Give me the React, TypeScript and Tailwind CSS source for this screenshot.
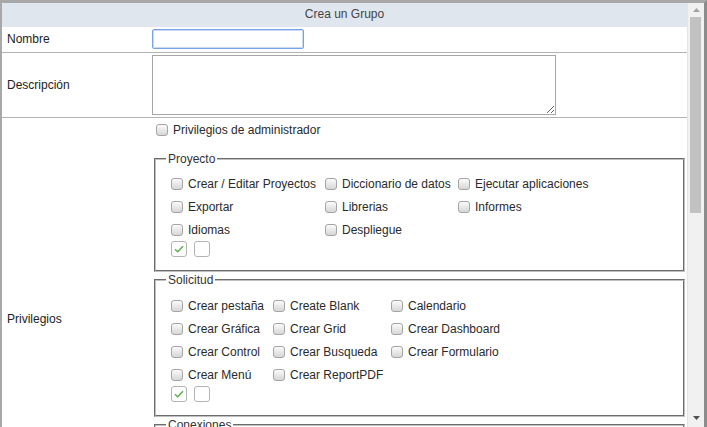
import React from 'react'

const proyecto = [
  'Crear / Editar Proyectos',
  'Diccionario de datos',
  'Ejecutar aplicaciones',
  'Exportar',
  'Librerias',
  'Informes',
  'Idiomas',
  'Despliegue',
]

const solicitud = [
  'Crear pestaña',
  'Create Blank',
  'Calendario',
  'Crear Gráfica',
  'Crear Grid',
  'Crear Dashboard',
  'Crear Control',
  'Crear Busqueda',
  'Crear Formulario',
  'Crear Menú',
  'Crear ReportPDF',
]

const conexiones = ['Crear Conexión', 'Editar Conexión', 'Eliminar Conexión', 'Probar Conexión']

function Box() {
  return (
    <span className="inline-block w-[12px] h-[12px] shrink-0 rounded-[3px] border border-[#a5a5a5] bg-linear-to-b from-[#fbfbfb] to-[#d6d6d6]" />
  )
}

function Check({ label }: { label: string }) {
  return (
    <div className="flex items-center h-[23px] whitespace-nowrap">
      <Box />
      <span className="ml-[5px]">{label}</span>
    </div>
  )
}

function Toggles() {
  return (
    <div className="flex gap-[7px] h-[16px]">
      <span className="w-[16px] h-[16px] rounded-[3px] border border-[#b3b3b3] bg-white flex items-center justify-center">
        <svg width="10" height="8" viewBox="0 0 10 8">
          <path d="M1 4.3 L3.7 6.8 L9 1.2" stroke="#5cae4a" strokeWidth="1.5" fill="none" />
        </svg>
      </span>
      <span className="w-[16px] h-[16px] rounded-[3px] border border-[#b3b3b3] bg-white" />
    </div>
  )
}

function Group({ title, items, cols, pt }: { title: string; items: string[]; cols: string; pt: string }) {
  return (
    <fieldset className={`mx-[2px] min-w-0 border-2 [border-style:groove] border-[#c0c0c0] pl-[10px] pr-[10px] pb-[13px] ${pt}`}>
      <legend className="px-[2px] leading-[14px] text-[#333]">{title}</legend>
      <div className="pl-[5px]">
        <div className={cols}>
          {items.map((it) => (
            <Check key={it} label={it} />
          ))}
        </div>
        <Toggles />
      </div>
    </fieldset>
  )
}

export default function App() {
  return (
    <div className="w-[707px] h-[427px] flex bg-white overflow-hidden font-['Liberation_Sans',Arial,sans-serif] text-[12px] text-[#222] border-t-[3px] border-l-2 border-[#a8a8a8] border-r-[3px] border-r-[#8c8c8c]">
      <div className="flex-1 min-w-0 overflow-hidden">
        <div className="h-[24px] pb-[2px] bg-[#dfe6ee] flex items-center justify-center text-[#444]">Crea un Grupo</div>

        <div className="flex border-b border-[#b4b4b4]">
          <div className="w-[148px] shrink-0 pl-[5px] pb-[1px] flex items-center">Nombre</div>
          <div className="pl-[2px] pt-[2px] pb-[3px]">
            <input
              type="text"
              className="block w-[152px] h-[20px] rounded-[2px] border border-[#7aa0e6] shadow-[inset_0_0_0_1px_#c9d9f6] outline-none px-1"
            />
          </div>
        </div>

        <div className="flex border-b border-[#b4b4b4]">
          <div className="w-[148px] shrink-0 pl-[5px] pb-[1px] flex items-center">Descripción</div>
          <div className="pl-[2px] pt-[2px] pb-[2px]">
            <textarea className="block w-[404px] h-[60px] border border-[#a6a6a6] outline-none" />
          </div>
        </div>

        <div className="flex border-b border-[#b4b4b4]">
          <div className="w-[148px] shrink-0 pl-[5px] flex items-center">Privilegios</div>
          <div className="flex-1 min-w-0 pl-[2px] pt-[1px] pb-[4px] text-[#2a2a2a]">
            <div className="flex items-center h-[22px] ml-[4px]">
              <Box />
              <span className="ml-[5px]">Privilegios de administrador</span>
            </div>
            <div className="mt-[11px] flex flex-col gap-[1px]">
              <Group title="Proyecto" items={proyecto} cols="grid grid-cols-[154px_133px_auto]" pt="pt-[6px]" />
              <Group title="Solicitud" items={solicitud} cols="grid grid-cols-[102px_118px_auto]" pt="pt-[7px]" />
              <Group title="Conexiones" items={conexiones} cols="grid grid-cols-[130px_130px_auto]" pt="pt-[7px]" />
            </div>
          </div>
        </div>
      </div>

      <div className="w-[17px] shrink-0 bg-[#f1f1f1] border-l border-[#e4e4e4] flex flex-col">
        <div className="h-[14px] flex items-center justify-center">
          <svg width="7" height="4" viewBox="0 0 7 4">
            <path d="M0 4 L3.5 0 L7 4 Z" fill="#a3a3a3" />
          </svg>
        </div>
        <div className="flex-1 pl-[2px] pr-[3px]">
          <div className="h-[196px] bg-[#c1c1c1]" />
        </div>
        <div className="h-[19px] flex items-center justify-center">
          <svg width="7" height="4" viewBox="0 0 7 4">
            <path d="M0 0 L7 0 L3.5 4 Z" fill="#505050" />
          </svg>
        </div>
      </div>
    </div>
  )
}
